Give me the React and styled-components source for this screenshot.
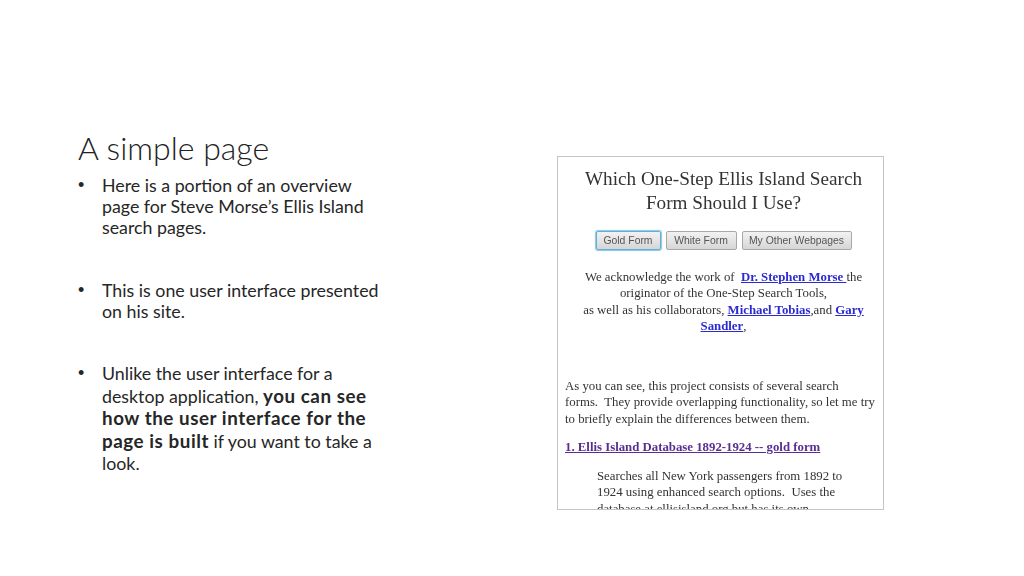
import React from "react";
import styled, { createGlobalStyle } from "styled-components";

const GlobalStyle = createGlobalStyle`
  html, body {
    margin: 0;
    padding: 0;
    background: #ffffff;
  }
`;

const Slide = styled.div`
  width: 1024px;
  height: 576px;
  display: flex;
  align-items: flex-start;
  padding: 130px 0 0 78px;
  box-sizing: border-box;
  overflow: hidden;
  background: #fff;
  font-family: Lato, "Open Sans", sans-serif;
  color: #262626;
`;

const TextColumn = styled.div`
  width: 479px;
  flex: none;
`;

const Title = styled.h1`
  margin: 0 0 10px;
  font-size: 32px;
  line-height: 35px;
  font-weight: 300;
  color: #222;
`;

const Bullets = styled.ul`
  margin: 0;
  padding: 0;
  list-style: none;
  display: flex;
  flex-direction: column;
  gap: 42px;
`;

const Bullet = styled.li`
  position: relative;
  padding-left: 24px;
  font-size: 17.8px;
  line-height: 21px;

  &::before {
    content: "•";
    position: absolute;
    left: 0;
    top: 0;
    font-family: "Liberation Sans", sans-serif;
    font-size: 18px;
  }
`;

const LastBullet = styled(Bullet)`
  margin-top: -2px;
  line-height: 22.5px;
`;

const Emphasis = styled.strong`
  font-weight: 700;
  font-size: 18.8px;
  letter-spacing: 0.55px;
`;

const ShotFrame = styled.div`
  width: 327px;
  height: 354px;
  margin-top: 26px;
  flex: none;
  box-sizing: border-box;
  border: 1px solid #c4c4c4;
  overflow: hidden;
  padding: 10px 7px 0;
  font-family: "Liberation Serif", serif;
  color: #333;
  filter: blur(0.3px);
`;

const Masthead = styled.div`
  padding-left: 6px;
  margin-bottom: 44px;
  text-align: center;
`;

const ShotHeading = styled.h2`
  margin: 0 0 16px;
  font-size: 19.2px;
  line-height: 24px;
  font-weight: 400;
  color: #333;
`;

const ButtonRow = styled.div`
  display: flex;
  justify-content: center;
  gap: 5px;
  margin-bottom: 19px;
`;

const FormButton = styled.button`
  height: 19px;
  width: ${(p) => p.$w}px;
  padding: 0;
  box-sizing: border-box;
  border-radius: 2px;
  border: 1px solid ${(p) => (p.$active ? "#62b0d6" : "#a8a8a8")};
  box-shadow: ${(p) => (p.$active ? "0 0 1px 1px #8cc6e2" : "none")};
  background: linear-gradient(#f2f2f2, #d6d6d6);
  font-family: "Liberation Sans", sans-serif;
  font-size: 10.4px;
  color: #555;
`;

const Credit = styled.p`
  margin: 0;
  font-size: 12.8px;
  line-height: 16.3px;
  white-space: nowrap;
  color: #333;
`;

const ShotLink = styled.a`
  font-weight: 700;
  color: #2a2ad0;
  text-decoration: underline;
`;

const Body = styled.p`
  margin: 0 0 12px;
  font-size: 12.8px;
  line-height: 16.3px;
  white-space: nowrap;
  color: #333;
`;

const SectionLink = styled.a`
  display: block;
  margin-bottom: 13px;
  font-size: 12.8px;
  line-height: 16px;
  font-weight: 700;
  color: #5a2d91;
  text-decoration: underline;
`;

const Indented = styled(Body)`
  margin: 0 0 0 32px;
`;

export default function App() {
  return (
    <>
      <GlobalStyle />
      <Slide>
        <TextColumn>
          <Title>A simple page</Title>
          <Bullets>
            <Bullet>
              Here is a portion of an overview
              <br />
              page for Steve Morse’s Ellis Island
              <br />
              search pages.
            </Bullet>
            <Bullet>
              This is one user interface presented
              <br />
              on his site.
            </Bullet>
            <LastBullet>
              Unlike the user interface for a
              <br />
              desktop application, <Emphasis>you can see</Emphasis>
              <br />
              <Emphasis>how the user interface for the</Emphasis>
              <br />
              <Emphasis>page is built</Emphasis> if you want to take a
              <br />
              look.
            </LastBullet>
          </Bullets>
        </TextColumn>
        <ShotFrame>
          <Masthead>
            <ShotHeading>
              Which One-Step Ellis Island Search
              <br />
              Form Should I Use?
            </ShotHeading>
            <ButtonRow>
              <FormButton $active $w={65}>Gold Form</FormButton>
              <FormButton $w={71}>White Form</FormButton>
              <FormButton $w={110}>My Other Webpages</FormButton>
            </ButtonRow>
            <Credit>
              We acknowledge the work of&nbsp; <ShotLink>Dr. Stephen Morse </ShotLink>the
              <br />
              originator of the One-Step Search Tools,
              <br />
              as well as his collaborators, <ShotLink>Michael Tobias</ShotLink>,and{" "}
              <ShotLink>Gary</ShotLink>
              <br />
              <ShotLink>Sandler</ShotLink>,
            </Credit>
          </Masthead>
          <Body>
            As you can see, this project consists of several search
            <br />
            forms.&nbsp; They provide overlapping functionality, so let me try
            <br />
            to briefly explain the differences between them.
          </Body>
          <SectionLink>1. Ellis Island Database 1892-1924 -- gold form</SectionLink>
          <Indented>
            Searches all New York passengers from 1892 to
            <br />
            1924 using enhanced search options.&nbsp; Uses the
            <br />
            database at ellisisland.org but has its own
          </Indented>
        </ShotFrame>
      </Slide>
    </>
  );
}
